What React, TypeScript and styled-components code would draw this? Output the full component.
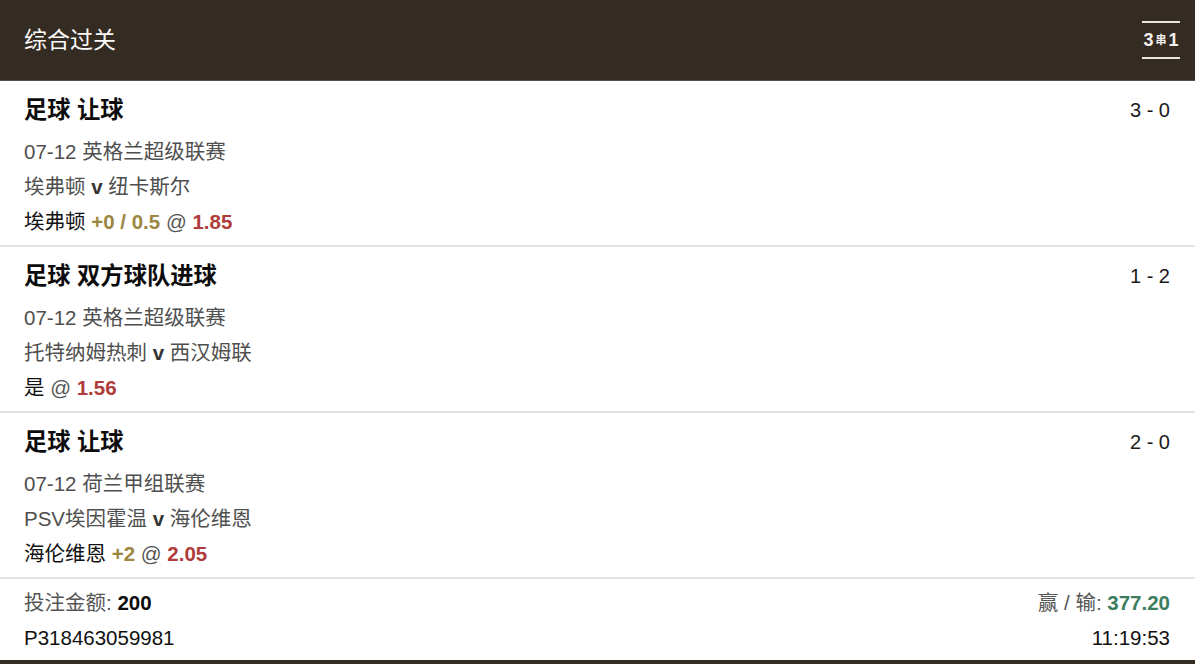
import styled, { createGlobalStyle } from "styled-components";

type Selection = {
  sport: string;
  market: string;
  score: string;
  date: string;
  league: string;
  home: string;
  away: string;
  pick: string;
  line?: string;
  odds: string;
};

const selections: Selection[] = [
  {
    sport: "足球",
    market: "让球",
    score: "3 - 0",
    date: "07-12",
    league: "英格兰超级联赛",
    home: "埃弗顿",
    away: "纽卡斯尔",
    pick: "埃弗顿",
    line: "+0 / 0.5",
    odds: "1.85",
  },
  {
    sport: "足球",
    market: "双方球队进球",
    score: "1 - 2",
    date: "07-12",
    league: "英格兰超级联赛",
    home: "托特纳姆热刺",
    away: "西汉姆联",
    pick: "是",
    odds: "1.56",
  },
  {
    sport: "足球",
    market: "让球",
    score: "2 - 0",
    date: "07-12",
    league: "荷兰甲组联赛",
    home: "PSV埃因霍温",
    away: "海伦维恩",
    pick: "海伦维恩",
    line: "+2",
    odds: "2.05",
  },
];

export default function App() {
  return (
    <>
      <GlobalStyle />
      <Page>
        <BetCard>
          <CardHeader>
            <HeaderTitle>综合过关</HeaderTitle>
            <ComboBadge>
              3<small>串</small>1
            </ComboBadge>
          </CardHeader>
          {selections.map((s, i) => (
            <SelectionRow key={i}>
              <TitleLine>
                <Title>
                  {s.sport} {s.market}
                </Title>
                <Score>{s.score}</Score>
              </TitleLine>
              <InfoLine>
                {s.date} {s.league}
              </InfoLine>
              <InfoLine>
                {s.home} <b>v</b> {s.away}
              </InfoLine>
              <PickLine>
                {s.pick}
                {s.line && <LineValue> {s.line}</LineValue>} <At>@</At>{" "}
                <Odds>{s.odds}</Odds>
              </PickLine>
            </SelectionRow>
          ))}
          <Footer>
            <FooterLine>
              <Label>
                投注金额: <strong>200</strong>
              </Label>
              <Label>
                赢 / 输: <Win>377.20</Win>
              </Label>
            </FooterLine>
            <FooterLine>
              <span>P318463059981</span>
              <span>11:19:53</span>
            </FooterLine>
          </Footer>
        </BetCard>
        <NextCardPeek />
      </Page>
    </>
  );
}

const GlobalStyle = createGlobalStyle`
  html, body {
    margin: 0;
    padding: 0;
    background: #ffffff;
    overflow: hidden;
  }
  body {
    font-family: "Liberation Sans", "Noto Sans CJK SC", sans-serif;
    color: #111;
  }
`;

const Page = styled.div`
  width: 1195px;
  display: flex;
  flex-direction: column;
`;

const BetCard = styled.div`
  display: flex;
  flex-direction: column;
  background: #fff;
`;

const CardHeader = styled.div`
  height: 80px;
  display: flex;
  align-items: center;
  justify-content: space-between;
  padding: 0 15px 0 24px;
  background: #342b23;
  border-bottom: 1px solid #57504a;
`;

const HeaderTitle = styled.div`
  color: #fbfaf8;
  font-size: 23px;
  line-height: 30px;
`;

const ComboBadge = styled.div`
  width: 38px;
  height: 34px;
  display: flex;
  align-items: center;
  justify-content: center;
  gap: 2px;
  border-top: 2px solid #e9e5e0;
  border-bottom: 2px solid #e9e5e0;
  color: #f4f1ed;
  font-size: 18px;
  font-weight: 700;
  line-height: 1;

  small {
    font-size: 11px;
    font-weight: 700;
  }
`;

const SelectionRow = styled.div`
  display: flex;
  flex-direction: column;
  padding: 12px 25px 6px 24px;
  border-bottom: 2px solid #e3e3e3;
`;

const TitleLine = styled.div`
  display: flex;
  justify-content: space-between;
  align-items: flex-start;
  margin-bottom: 7px;
`;

const Title = styled.div`
  font-size: 23.3px;
  font-weight: 700;
  line-height: 34px;
  color: #0c0c0c;
`;

const Score = styled.div`
  font-size: 20px;
  line-height: 34px;
  color: #1a1a1a;
`;

const InfoLine = styled.div`
  font-size: 20.5px;
  line-height: 35px;
  color: #4f4f4f;

  b {
    color: #333;
  }
`;

const PickLine = styled.div`
  font-size: 20.5px;
  line-height: 35px;
  color: #111;
`;

const LineValue = styled.b`
  color: #9d8641;
`;

const At = styled.span`
  color: #555;
`;

const Odds = styled.b`
  color: #b03b3b;
`;

const Footer = styled.div`
  display: flex;
  flex-direction: column;
  padding: 6px 25px 5px 24px;
`;

const FooterLine = styled.div`
  display: flex;
  justify-content: space-between;
  font-size: 20.5px;
  line-height: 35px;
  color: #111;
`;

const Label = styled.span`
  color: #555;

  strong {
    color: #0c0c0c;
  }
`;

const Win = styled.b`
  color: #3c7d5e;
`;

const NextCardPeek = styled.div`
  height: 80px;
  background: #342b23;
`;
